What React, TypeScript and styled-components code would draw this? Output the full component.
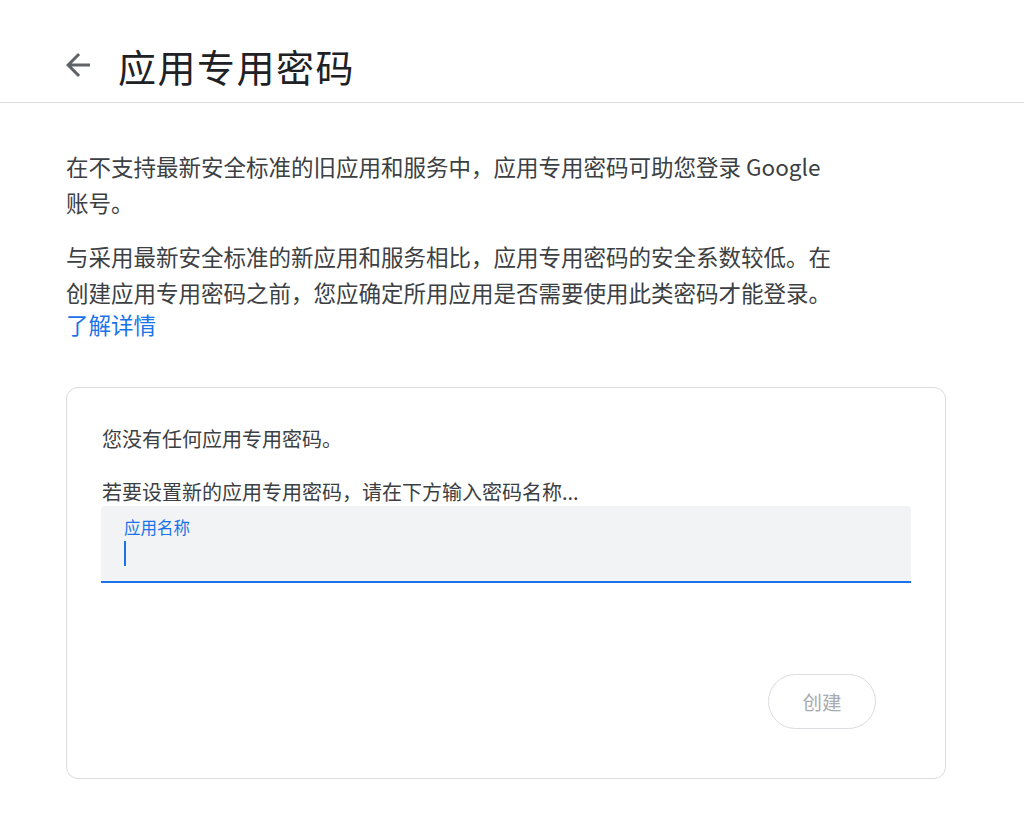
import * as React from "react";
import styled, { createGlobalStyle } from "styled-components";

const GlobalStyle = createGlobalStyle`
  html, body {
    margin: 0;
    padding: 0;
    background: #ffffff;
  }
  body {
    font-family: "Noto Sans CJK SC", "Noto Sans", Roboto, sans-serif;
    color: #3c4043;
  }
`;

const Header = styled.header`
  display: flex;
  align-items: center;
  height: 103px;
  box-sizing: border-box;
  padding: 28px 0 0 60px;
  border-bottom: 1px solid #dadce0;
`;

const BackButton = styled.button`
  display: flex;
  align-items: center;
  justify-content: center;
  width: 36px;
  height: 36px;
  padding: 0;
  border: none;
  background: none;
  color: #5f6368;
  cursor: pointer;
`;

const Title = styled.h1`
  margin: 0 0 0 22px;
  font-size: 38px;
  font-weight: 400;
  color: #202124;
  letter-spacing: 1.5px;
`;

const Main = styled.main`
  padding: 45px 66px 40px;
`;

const Intro = styled.div`
  max-width: 775px;
`;

const Paragraph = styled.p`
  margin: 0 0 18px;
  font-size: 22.5px;
  line-height: 36px;
  color: #3c4043;
`;

const Link = styled.a`
  display: block;
  line-height: 28px;
  color: #1a73e8;
  text-decoration: none;
`;

const Card = styled.section`
  margin-top: 49px;
  width: 880px;
  box-sizing: border-box;
  border: 1px solid #dadce0;
  border-radius: 12px;
  padding: 37px 34px 49px 34px;
  display: flex;
  flex-direction: column;
`;

const CardText = styled.p<{ $gap?: number }>`
  margin: 0 0 ${(p) => p.$gap ?? 0}px 1px;
  font-size: 20px;
  line-height: 28px;
  color: #3c4043;
`;

const Field = styled.div`
  height: 77px;
  box-sizing: border-box;
  background: #f1f3f4;
  border-radius: 4px 4px 0 0;
  border-bottom: 2px solid #1a73e8;
  padding: 10px 23px 0;
  display: flex;
  flex-direction: column;
`;

const FieldLabel = styled.label`
  font-size: 16.5px;
  line-height: 22px;
  color: #1a73e8;
`;

const Caret = styled.span`
  display: block;
  width: 2px;
  height: 25px;
  margin-top: 3px;
  background: #1a73e8;
`;

const Actions = styled.div`
  display: flex;
  justify-content: flex-end;
  margin-top: 91px;
  padding-right: 35px;
`;

const CreateButton = styled.button`
  width: 108px;
  height: 55px;
  border-radius: 28px;
  border: 1px solid #dadce0;
  background: #ffffff;
  color: #a8abaf;
  font-family: inherit;
  font-size: 19.5px;
  cursor: default;
`;

const ArrowBack = () => (
  <svg width="36" height="36" viewBox="0 0 24 24" fill="currentColor">
    <path d="M20 11H7.83l5.59-5.59L12 4l-8 8 8 8 1.41-1.41L7.83 13H20v-2z" />
  </svg>
);

export default function App() {
  return (
    <>
      <GlobalStyle />
      <Header>
        <BackButton aria-label="返回">
          <ArrowBack />
        </BackButton>
        <Title>应用专用密码</Title>
      </Header>
      <Main>
        <Intro>
          <Paragraph>
            在不支持最新安全标准的旧应用和服务中，应用专用密码可助您登录 Google 账号。
          </Paragraph>
          <Paragraph>
            与采用最新安全标准的新应用和服务相比，应用专用密码的安全系数较低。在创建应用专用密码之前，您应确定所用应用是否需要使用此类密码才能登录。
            <Link href="#">了解详情</Link>
          </Paragraph>
        </Intro>
        <Card>
          <CardText $gap={25}>您没有任何应用专用密码。</CardText>
          <CardText>若要设置新的应用专用密码，请在下方输入密码名称...</CardText>
          <Field>
            <FieldLabel>应用名称</FieldLabel>
            <Caret />
          </Field>
          <Actions>
            <CreateButton disabled>创建</CreateButton>
          </Actions>
        </Card>
      </Main>
    </>
  );
}
